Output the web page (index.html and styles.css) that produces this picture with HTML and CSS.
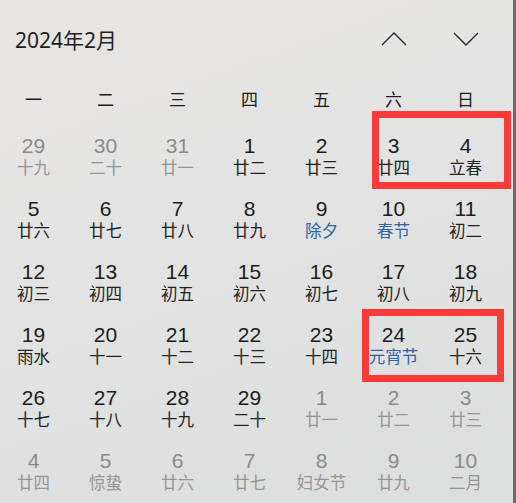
FILE: index.html
```html
<!DOCTYPE html>
<html lang="zh-CN">
<head>
<meta charset="utf-8">
<title>日历</title>
<link rel="stylesheet" href="styles.css">
</head>
<body>
<div class="panel">
  <div class="header">
    <div class="title">2024年2月</div>
    <button class="nav" aria-label="上一月">
      <svg width="26" height="14" viewBox="0 0 26 14"><polyline points="1,13 13,1 25,13" fill="none" stroke="#262626" stroke-width="1.4"/></svg>
    </button>
    <button class="nav" aria-label="下一月">
      <svg width="26" height="14" viewBox="0 0 26 14"><polyline points="1,1 13,13 25,1" fill="none" stroke="#262626" stroke-width="1.4"/></svg>
    </button>
  </div>
  <div class="weekdays">
    <div>一</div><div>二</div><div>三</div><div>四</div><div>五</div><div>六</div><div>日</div>
  </div>
  <div class="days">
    <div class="day out"><div class="n">29</div><div class="l">十九</div></div>
    <div class="day out"><div class="n">30</div><div class="l">二十</div></div>
    <div class="day out"><div class="n">31</div><div class="l">廿一</div></div>
    <div class="day"><div class="n">1</div><div class="l">廿二</div></div>
    <div class="day"><div class="n">2</div><div class="l">廿三</div></div>
    <div class="day"><div class="n">3</div><div class="l">廿四</div></div>
    <div class="day"><div class="n">4</div><div class="l">立春</div></div>

    <div class="day"><div class="n">5</div><div class="l">廿六</div></div>
    <div class="day"><div class="n">6</div><div class="l">廿七</div></div>
    <div class="day"><div class="n">7</div><div class="l">廿八</div></div>
    <div class="day"><div class="n">8</div><div class="l">廿九</div></div>
    <div class="day"><div class="n">9</div><div class="l fest">除夕</div></div>
    <div class="day"><div class="n">10</div><div class="l fest">春节</div></div>
    <div class="day"><div class="n">11</div><div class="l">初二</div></div>

    <div class="day"><div class="n">12</div><div class="l">初三</div></div>
    <div class="day"><div class="n">13</div><div class="l">初四</div></div>
    <div class="day"><div class="n">14</div><div class="l">初五</div></div>
    <div class="day"><div class="n">15</div><div class="l">初六</div></div>
    <div class="day"><div class="n">16</div><div class="l">初七</div></div>
    <div class="day"><div class="n">17</div><div class="l">初八</div></div>
    <div class="day"><div class="n">18</div><div class="l">初九</div></div>

    <div class="day"><div class="n">19</div><div class="l">雨水</div></div>
    <div class="day"><div class="n">20</div><div class="l">十一</div></div>
    <div class="day"><div class="n">21</div><div class="l">十二</div></div>
    <div class="day"><div class="n">22</div><div class="l">十三</div></div>
    <div class="day"><div class="n">23</div><div class="l">十四</div></div>
    <div class="day"><div class="n">24</div><div class="l fest">元宵节</div></div>
    <div class="day"><div class="n">25</div><div class="l">十六</div></div>

    <div class="day"><div class="n">26</div><div class="l">十七</div></div>
    <div class="day"><div class="n">27</div><div class="l">十八</div></div>
    <div class="day"><div class="n">28</div><div class="l">十九</div></div>
    <div class="day"><div class="n">29</div><div class="l">二十</div></div>
    <div class="day out"><div class="n">1</div><div class="l">廿一</div></div>
    <div class="day out"><div class="n">2</div><div class="l">廿二</div></div>
    <div class="day out"><div class="n">3</div><div class="l">廿三</div></div>

    <div class="day out"><div class="n">4</div><div class="l">廿四</div></div>
    <div class="day out"><div class="n">5</div><div class="l">惊蛰</div></div>
    <div class="day out"><div class="n">6</div><div class="l">廿六</div></div>
    <div class="day out"><div class="n">7</div><div class="l">廿七</div></div>
    <div class="day out"><div class="n">8</div><div class="l">妇女节</div></div>
    <div class="day out"><div class="n">9</div><div class="l">廿九</div></div>
    <div class="day out"><div class="n">10</div><div class="l">二月</div></div>
  </div>
  <div class="mark mark-a"></div>
  <div class="mark mark-b"></div>
</div>
</body>
</html>
```

FILE: styles.css
```css
html, body {
  margin: 0;
  padding: 0;
}
body {
  width: 516px;
  height: 503px;
  overflow: hidden;
  font-family: "Noto Sans", "Noto Sans CJK SC", sans-serif;
  color: #1b1b1b;
}
.panel {
  position: relative;
  box-sizing: border-box;
  width: 516px;
  height: 503px;
  border-right: 3px solid #6c6c6c;
  background: linear-gradient(160deg, #e8e6e4 0%, #e3e3e3 45%, #dcdddd 100%);
  overflow: hidden;
}
.header {
  display: flex;
  align-items: center;
  height: 78px;
  padding: 0 11.5px 0 15px;
}
.title {
  flex: 1;
  font-family: "Noto Sans", "Noto Sans CJK SC", sans-serif;
  font-size: 21px;
  color: #1f1f1f;
}
.nav {
  width: 72px;
  height: 40px;
  display: flex;
  align-items: center;
  justify-content: center;
  border: 0;
  background: none;
  padding: 0;
}
.weekdays {
  display: grid;
  grid-template-columns: repeat(7, 72px);
  margin-left: -2.5px;
  height: 40px;
  align-items: center;
  font-family: "Noto Sans CJK SC", sans-serif;
  font-size: 17px;
  color: #1b1b1b;
}
.weekdays div {
  text-align: center;
}
.days {
  display: grid;
  grid-template-columns: repeat(7, 72px);
  grid-auto-rows: 63px;
  margin-left: -2.5px;
  padding-top: 7px;
}
.day {
  display: flex;
  flex-direction: column;
  align-items: center;
  justify-content: center;
}
.n {
  font-family: "Liberation Sans", "Noto Sans", sans-serif;
  font-size: 21px;
  line-height: 22px;
  height: 22px;
}
.l {
  font-family: "Liberation Sans", "Noto Sans CJK SC", sans-serif;
  font-size: 16.5px;
  line-height: 20px;
  height: 20px;
  margin-top: 1px;
  color: #222;
}
.l.fest {
  color: #2a64a2;
}
.day.out .n {
  color: #8a8a8a;
}
.day.out .l {
  color: #959595;
}
.mark {
  position: absolute;
  border: 7px solid #fd3a3a;
  box-sizing: border-box;
}
.mark-a {
  left: 372px;
  top: 111px;
  width: 139px;
  height: 78px;
}
.mark-b {
  left: 362px;
  top: 309px;
  width: 142px;
  height: 73px;
}
```
